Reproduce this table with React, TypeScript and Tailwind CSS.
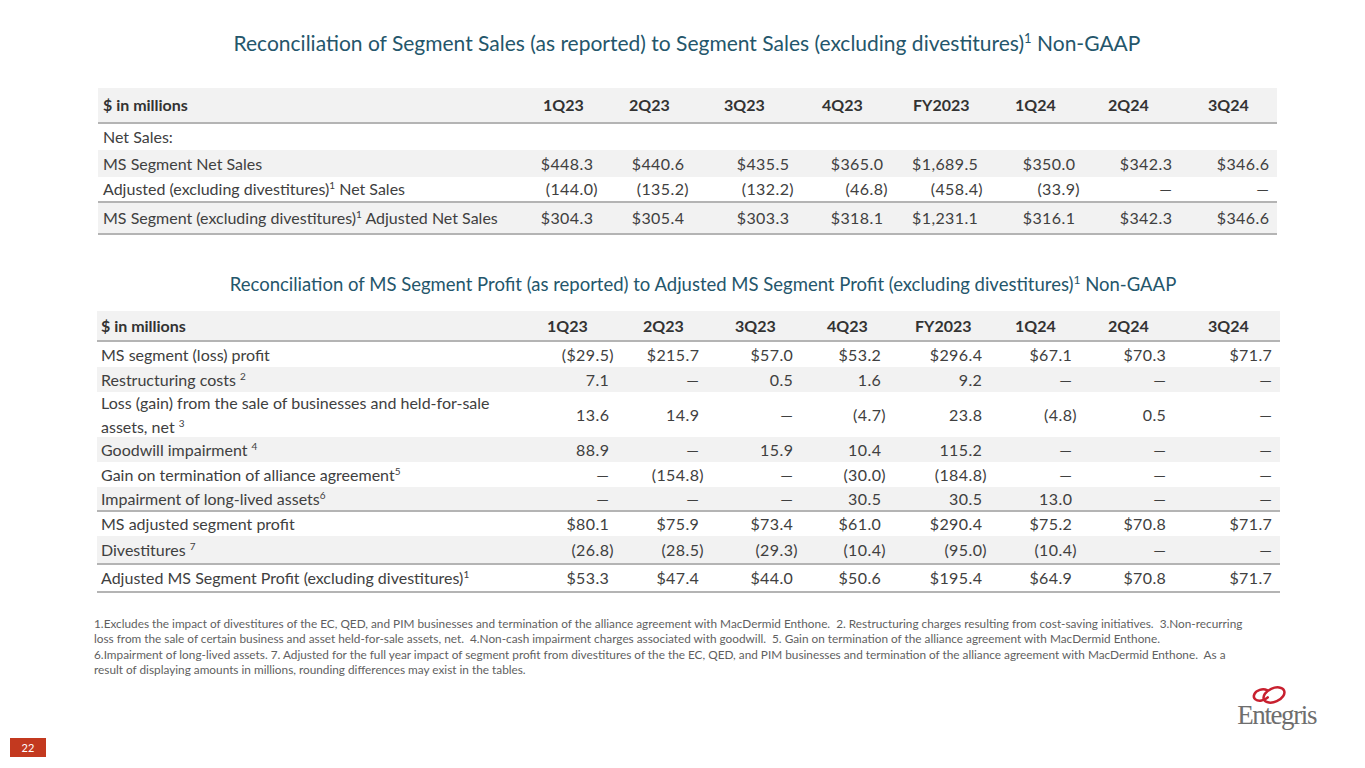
import React from "react";

type Row = {
  label: React.ReactNode;
  values?: string[];
  shade?: boolean;
  h: string;
  line?: boolean;
};

const t1Cols = ["w-[94px]", "w-[91px]", "w-[105px]", "w-[94px]", "w-[95px]", "w-[97px]", "w-[97px]", "w-[97px]"];
const t1HeadPad = ["pl-[36px]", "pl-[28px]", "pl-[32px]", "pl-[25px]", "pl-[22px]", "pl-[29px]", "pl-[25px]", "pl-[28px]"];

const t2Cols = ["w-[97px]", "w-[90px]", "w-[94px]", "w-[88px]", "w-[101px]", "w-[90px]", "w-[94px]", "w-[106px]"];
const t2HeadPad = ["pl-[27px]", "pl-[26px]", "pl-[28px]", "pl-[26px]", "pl-[26px]", "pl-[25px]", "pl-[28px]", "pl-[34px]"];

const periods = ["1Q23", "2Q23", "3Q23", "4Q23", "FY2023", "1Q24", "2Q24", "3Q24"];

const Sup = ({ n }: { n: string }) => <sup className="text-[10px] -top-[0.6em]">{n}</sup>;

const salesRows: Row[] = [
  { label: "Net Sales:", h: "h-[26px]" },
  {
    label: "MS Segment Net Sales",
    values: ["$448.3", "$440.6", "$435.5", "$365.0", "$1,689.5", "$350.0", "$342.3", "$346.6"],
    shade: true,
    h: "h-[27px]",
  },
  {
    label: (
      <>
        Adjusted (excluding divestitures)
        <Sup n="1" /> Net Sales
      </>
    ),
    values: ["(144.0)", "(135.2)", "(132.2)", "(46.8)", "(458.4)", "(33.9)", "—", "—"],
    h: "h-[26px]",
    line: true,
  },
  {
    label: (
      <>
        MS Segment (excluding divestitures)
        <Sup n="1" /> Adjusted Net Sales
      </>
    ),
    values: ["$304.3", "$305.4", "$303.3", "$318.1", "$1,231.1", "$316.1", "$342.3", "$346.6"],
    shade: true,
    h: "h-[32px]",
    line: true,
  },
];

const profitRows: Row[] = [
  {
    label: "MS segment (loss) profit",
    values: ["($29.5)", "$215.7", "$57.0", "$53.2", "$296.4", "$67.1", "$70.3", "$71.7"],
    h: "h-[25px]",
  },
  {
    label: (
      <>
        Restructuring costs <Sup n="2" />
      </>
    ),
    values: ["7.1", "—", "0.5", "1.6", "9.2", "—", "—", "—"],
    shade: true,
    h: "h-[25px]",
  },
  {
    label: (
      <span className="leading-[20px]">
        Loss (gain) from the sale of businesses and held-for-sale
        <br />
        assets, net <Sup n="3" />
      </span>
    ),
    values: ["13.6", "14.9", "—", "(4.7)", "23.8", "(4.8)", "0.5", "—"],
    h: "h-[45px]",
  },
  {
    label: (
      <>
        Goodwill impairment <Sup n="4" />
      </>
    ),
    values: ["88.9", "—", "15.9", "10.4", "115.2", "—", "—", "—"],
    shade: true,
    h: "h-[25px]",
  },
  {
    label: (
      <>
        Gain on termination of alliance agreement
        <Sup n="5" />
      </>
    ),
    values: ["—", "(154.8)", "—", "(30.0)", "(184.8)", "—", "—", "—"],
    h: "h-[25px]",
  },
  {
    label: (
      <>
        Impairment of long-lived assets
        <Sup n="6" />
      </>
    ),
    values: ["—", "—", "—", "30.5", "30.5", "13.0", "—", "—"],
    shade: true,
    h: "h-[25px]",
    line: true,
  },
  {
    label: "MS adjusted segment profit",
    values: ["$80.1", "$75.9", "$73.4", "$61.0", "$290.4", "$75.2", "$70.8", "$71.7"],
    h: "h-[24px]",
  },
  {
    label: (
      <>
        Divestitures <Sup n="7" />
      </>
    ),
    values: ["(26.8)", "(28.5)", "(29.3)", "(10.4)", "(95.0)", "(10.4)", "—", "—"],
    shade: true,
    h: "h-[29px]",
    line: true,
  },
  {
    label: (
      <>
        Adjusted MS Segment Profit (excluding divestitures)
        <Sup n="1" />
      </>
    ),
    values: ["$53.3", "$47.4", "$44.0", "$50.6", "$195.4", "$64.9", "$70.8", "$71.7"],
    h: "h-[28px]",
    line: true,
  },
];

function Value({ v }: { v: string }) {
  // accounting style: positive numbers keep room for the closing paren
  const paren = v.endsWith(")");
  return (
    <span>
      {v}
      {!paren && <span className="invisible">)</span>}
    </span>
  );
}

function Table({
  rows,
  cols,
  headPad,
  labelW,
  headH,
  labelPad,
}: {
  rows: Row[];
  cols: string[];
  headPad: string[];
  labelW: string;
  headH: string;
  labelPad: string;
}) {
  return (
    <div className="flex flex-col w-fit text-[16px] text-[#404040]">
      <div className={`flex items-center bg-[#f2f2f2] border-b-2 border-[#b4b4b4] font-bold text-[#333] ${headH}`}>
        <div className={`${labelW} ${labelPad}`}>$ in millions</div>
        {periods.map((p, i) => (
          <div key={p} className={`${cols[i]} ${headPad[i]}`}>
            {p}
          </div>
        ))}
      </div>
      {rows.map((r, idx) => (
        <div
          key={idx}
          className={`flex items-center ${r.h} ${r.shade ? "bg-[#f2f2f2]" : "bg-white"} ${
            r.line ? "border-b-2 border-[#b4b4b4]" : ""
          }`}
        >
          <div className={`${labelW} ${labelPad} whitespace-nowrap`}>{r.label}</div>
          {r.values &&
            r.values.map((v, i) => (
              <div key={i} className={`${cols[i]} text-right pr-[3px] tracking-[0.4px]`}>
                <Value v={v} />
              </div>
            ))}
        </div>
      ))}
    </div>
  );
}

function Logo() {
  return (
    <div className="flex flex-col items-center">
      <svg width="38" height="22" viewBox="0 0 38 22" className="mr-[14px]">
        <path d="M16 6.2 C12 4 5 6 3.2 10.5 C1.6 14.5 5.5 17.5 10.5 16.6 C13 16.1 15.2 15 16.8 13.4" fill="none" stroke="#c8202f" strokeWidth="2.5" strokeLinecap="round" />
        <ellipse cx="23" cy="11" rx="11" ry="6.8" transform="rotate(-24 23 11)" fill="none" stroke="#c8202f" strokeWidth="2.5" />
      </svg>
      <div className="font-['Liberation_Serif',serif] text-[27px] leading-[24px] tracking-[-1.4px] text-[#6e6e6e] -mt-[3px]">
        Entegris
      </div>
    </div>
  );
}

export default function App() {
  return (
    <div className="w-[1365px] h-[768px] bg-white flex flex-col font-['Lato',sans-serif] overflow-hidden">
      <h1 className="pt-[31px] pl-[9px] text-center text-[21px] leading-[24px] text-[#24566b]">
        Reconciliation of Segment Sales (as reported) to Segment Sales (excluding divestitures)
        <sup className="text-[13px] -top-[0.6em]">1</sup> Non-GAAP
      </h1>

      <div className="mt-[33px] pl-[98px]">
        <Table
          rows={salesRows}
          cols={t1Cols}
          headPad={t1HeadPad}
          labelW="w-[409px]"
          headH="h-[36px]"
          labelPad="pl-[5px]"
        />
      </div>

      <h2 className="mt-[38px] pl-[41px] text-center text-[18.5px] leading-[22px] text-[#24566b]">
        Reconciliation of MS Segment Profit (as reported) to Adjusted MS Segment Profit (excluding divestitures)
        <sup className="text-[12px] -top-[0.6em]">1</sup> Non-GAAP
      </h2>

      <div className="mt-[16px] pl-[97px]">
        <Table
          rows={profitRows}
          cols={t2Cols}
          headPad={t2HeadPad}
          labelW="w-[423px]"
          headH="h-[31px]"
          labelPad="pl-[4px]"
        />
      </div>

      <div className="mt-[23px] pl-[94px] text-[11.8px] leading-[15.4px] text-[#5f5f5f] whitespace-pre">
        <div>
          1.Excludes the impact of divestitures of the EC, QED, and PIM businesses and termination of the alliance agreement with MacDermid Enthone.  2. Restructuring charges resulting from cost-saving initiatives.  3.Non-recurring
        </div>
        <div>
          loss from the sale of certain business and asset held-for-sale assets, net.  4.Non-cash impairment charges associated with goodwill.  5. Gain on termination of the alliance agreement with MacDermid Enthone.
        </div>
        <div>
          6.Impairment of long-lived assets. 7. Adjusted for the full year impact of segment profit from divestitures of the the EC, QED, and PIM businesses and termination of the alliance agreement with MacDermid Enthone.  As a
        </div>
        <div>result of displaying amounts in millions, rounding differences may exist in the tables.</div>
      </div>

      <div className="mt-auto flex items-end justify-between pl-[10px] pr-[49px] pb-[11px]">
        <div className="w-[36px] h-[19px] bg-[#c3391f] text-white text-[11px] leading-[19px] text-center">22</div>
        <div className="mb-[30px]">
          <Logo />
        </div>
      </div>
    </div>
  );
}
